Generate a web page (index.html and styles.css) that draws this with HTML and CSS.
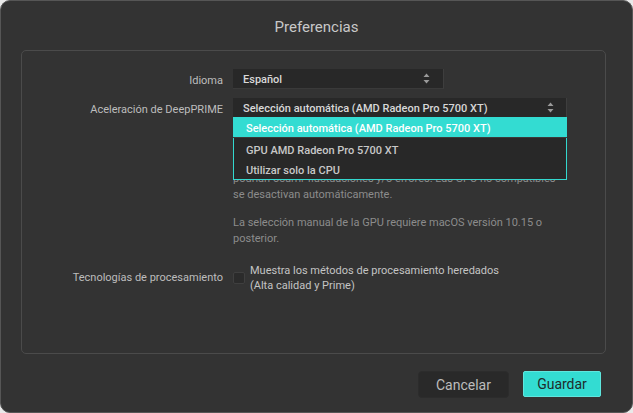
FILE: index.html
```html
<!DOCTYPE html>
<html lang="es">
<head>
<meta charset="utf-8">
<title>Preferencias</title>
<link rel="stylesheet" href="styles.css">
</head>
<body>
<div class="window">
  <h1 class="title">Preferencias</h1>
  <div class="panel">
    <div class="row">
      <div class="label">Idioma</div>
      <div class="control">
        <div class="select select-short">
          <span class="select-text">Español</span>
          <svg class="arrows" width="7" height="11" viewBox="0 0 7 11"><path d="M3.5 0.5 L6.5 4 L0.5 4 Z M3.5 10.5 L6.5 7 L0.5 7 Z" fill="#9a9a9a"/></svg>
        </div>
      </div>
    </div>
    <div class="row row-deep">
      <div class="label">Aceleración de DeepPRIME</div>
      <div class="control">
        <div class="select-wrap">
          <div class="select select-long">
            <span class="select-text">Selección automática (AMD Radeon Pro 5700 XT)</span>
            <svg class="arrows" width="7" height="11" viewBox="0 0 7 11"><path d="M3.5 0.5 L6.5 4 L0.5 4 Z M3.5 10.5 L6.5 7 L0.5 7 Z" fill="#9a9a9a"/></svg>
          </div>
          <ul class="menu">
            <li class="menu-item active">Selección automática (AMD Radeon Pro 5700 XT)</li>
            <li class="menu-item">GPU AMD Radeon Pro 5700 XT</li>
            <li class="menu-item">Utilizar solo la CPU</li>
          </ul>
        </div>
        <p class="help">La aceleración por GPU permite procesar las imágenes con<br>DeepPRIME mucho más rápido. Con algunas tarjetas gráficas<br>antiguas o con controladores no actualizados,<br>podrían ocurrir fluctuaciones y/o errores. Las GPU no compatibles<br>se desactivan automáticamente.</p>
        <p class="help">La selección manual de la GPU requiere macOS versión 10.15 o<br>posterior.</p>
      </div>
    </div>
    <div class="row row-check">
      <div class="label">Tecnologías de procesamiento</div>
      <div class="control check-control">
        <span class="checkbox"></span>
        <span class="check-text">Muestra los métodos de procesamiento heredados<br>(Alta calidad y Prime)</span>
      </div>
    </div>
  </div>
  <div class="buttons">
    <button class="btn btn-cancel">Cancelar</button>
    <button class="btn btn-save">Guardar</button>
  </div>
</div>
</body>
</html>
```
FILE: styles.css
```css
html, body {
  margin: 0;
  padding: 0;
  background: #e9e9e9;
}
.window {
  box-sizing: border-box;
  width: 633px;
  height: 413px;
  background: #333333;
  border: 1px solid #565656;
  border-radius: 10px;
  padding: 0 26px 0 20px;
  font-family: Roboto, "Liberation Sans", sans-serif;
  display: flex;
  flex-direction: column;
}
.title {
  margin: 0 -6px 0 0;
  height: 49px;
  box-sizing: border-box;
  padding-top: 17px;
  line-height: 18px;
  text-align: center;
  font-size: 15px;
  font-weight: 400;
  color: #c8c8c8;
}
.panel {
  box-sizing: border-box;
  width: 585px;
  height: 304px;
  border: 1px solid #4b4b4b;
  border-radius: 5px;
  padding-top: 18px;
  display: flex;
  flex-direction: column;
}
.row {
  display: flex;
  align-items: flex-start;
}
.label {
  box-sizing: border-box;
  width: 201px;
  height: 20px;
  padding-top: 2px;
  flex: none;
  text-align: right;
  font-size: 11px;
  color: #bdbdbd;
  line-height: 20px;
  margin-right: 10px;
}
.control {
  flex: none;
}
.row-deep {
  margin-top: 9px;
}
.select {
  box-sizing: border-box;
  height: 20px;
  background: #282828;
  border-right: 1px solid #3e3e3e;
  border-bottom: 1px solid #3a3a3a;
  display: flex;
  align-items: center;
  justify-content: space-between;
  padding: 0 12px 0 10px;
  font-size: 11px;
  font-weight: 500;
  color: #d8d8d8;
}
.select-text {
  padding-top: 3px;
  line-height: 16px;
}
.select-short { width: 211px; padding-right: 13px; }
.select-long { width: 334px; }
.select-wrap {
  position: relative;
}
.arrows { display: block; }
.menu {
  position: absolute;
  left: 0;
  top: 19px;
  box-sizing: border-box;
  width: 334px;
  height: 63px;
  margin: 0;
  padding: 0;
  list-style: none;
  background: #282828;
  border: 1px solid #33d8ce;
  z-index: 2;
}
.menu-item {
  height: 18px;
  padding-top: 2px;
  line-height: 20px;
  padding-left: 12px;
  font-size: 11px;
  font-weight: 500;
  color: #c8c8c8;
}
.menu-item.active {
  background: #33dcd2;
  color: #ffffff;
  margin: -1px -1px 1px -1px;
  padding-left: 13px;
  padding-top: 2px;
  height: 18px;
  line-height: 20px;
  border-bottom: 1px solid #3a3a3a;
}
.help {
  margin: 5px 0 0 0;
  font-size: 11px;
  line-height: 16px;
  color: #8c8c8c;
}
.help + .help {
  margin-top: 12px;
}
.row-check {
  margin-top: 15px;
}
.row-check .label {
  height: 32px;
  padding-top: 0;
  line-height: 32px;
}
.check-control {
  display: flex;
  align-items: flex-start;
}
.checkbox {
  box-sizing: border-box;
  width: 12px;
  height: 12px;
  margin-top: 10px;
  background: #2b2b2b;
  border: 1px solid #3f3f3f;
  border-radius: 2px;
  margin-right: 5px;
  flex: none;
}
.check-text {
  font-size: 11px;
  line-height: 15px;
  color: #c4c4c4;
  padding-top: 1px;
}
.buttons {
  display: flex;
  justify-content: flex-end;
  gap: 14px;
  margin-top: 17px;
  margin-right: 5px;
}
.btn {
  box-sizing: border-box;
  height: 27px;
  border-radius: 4px;
  font-family: Roboto, "Liberation Sans", sans-serif;
  font-size: 14px;
  padding: 0;
}
.btn-cancel {
  width: 91px;
  background: #292929;
  border: 1px solid #2c2c2c;
  color: #bcbcbc;
}
.btn-save {
  width: 78px;
  height: 26px;
  background: #33dcd2;
  border: 1px solid #5fe6de;
  border-radius: 2px;
  color: #1f2b2b;
}
```
